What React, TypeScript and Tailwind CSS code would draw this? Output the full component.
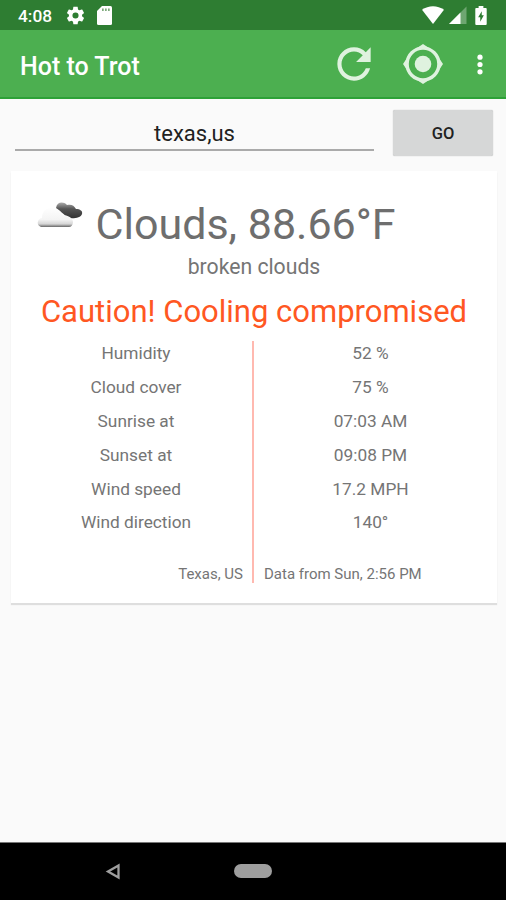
const readings: [string, string][] = [
  ["Humidity", "52 %"],
  ["Cloud cover", "75 %"],
  ["Sunrise at", "07:03 AM"],
  ["Sunset at", "09:08 PM"],
  ["Wind speed", "17.2 MPH"],
  ["Wind direction", "140°"],
];

function StatusBar() {
  return (
    <div className="flex h-[30px] shrink-0 items-center bg-[#2e7d32] pl-[18px] pr-[19px] text-white">
      <span className="w-[47px] pt-[2px] text-[17.300px] font-medium leading-5">4:08</span>
      <svg className="size-[21px]" viewBox="0 0 24 24" fill="currentColor">
        <path d="M19.43 12.98c.04-.32.07-.64.07-.98s-.03-.66-.07-.98l2.11-1.65c.19-.15.24-.42.12-.64l-2-3.46c-.12-.22-.39-.3-.61-.22l-2.49 1c-.52-.4-1.08-.73-1.69-.98l-.38-2.65C14.46 2.18 14.25 2 14 2h-4c-.25 0-.46.18-.49.42l-.38 2.65c-.61.25-1.17.59-1.69.98l-2.49-1c-.23-.09-.49 0-.61.22l-2 3.46c-.13.22-.07.49.12.64l2.11 1.65c-.04.32-.07.65-.07.98s.03.66.07.98l-2.11 1.65c-.19.15-.24.42-.12.64l2 3.46c.12.22.39.3.61.22l2.49-1c.52.4 1.08.73 1.69.98l.38 2.65c.03.24.24.42.49.42h4c.25 0 .46-.18.49-.42l.38-2.65c.61-.25 1.17-.59 1.69-.98l2.49 1c.23.09.49 0 .61-.22l2-3.46c.12-.22.07-.49-.12-.64l-2.11-1.65zM12 15.500a3.500 3.500 0 1 1 0-7 3.500 3.500 0 0 1 0 7z" />
      </svg>
      <svg className="ml-[11px] h-[19px] w-[15px]" viewBox="0 0 15 19">
        <path d="M5 0h8.500A1.500 1.500 0 0 1 15 1.500v16a1.500 1.500 0 0 1-1.500 1.500h-12A1.500 1.500 0 0 1 0 17.500V5z" fill="white" />
        <path d="M5 2.500h1.700V5H5zM8 2.500h1.700V5H8zM11 2.500h1.700V5H11z" fill="#7eaa7d" />
      </svg>
      <div className="grow" />
      <svg className="h-[18px] w-[22px]" viewBox="0 0 22 18">
        <path d="M0 3.800C6.500-.9 15.500-.9 22 3.800L11 18z" fill="white" />
      </svg>
      <svg className="ml-[5px] h-[18px] w-[18px]" viewBox="0 0 18 18">
        <path d="M0 18L17.500.5V18z" fill="#6ea671" />
        <path d="M0 18L11.500 6.500V18z" fill="white" />
      </svg>
      <svg className="ml-[8px] h-[19px] w-[12px]" viewBox="0 0 12 20">
        <path d="M3.500 0h5v2H11a1 1 0 0 1 1 1v16a1 1 0 0 1-1 1H1a1 1 0 0 1-1-1V3a1 1 0 0 1 1-1h2.500z" fill="white" />
        <path d="M6.800 5.500v4.300h2.200L5.200 16.500v-4.700H3z" fill="#2e7d32" />
      </svg>
    </div>
  );
}

function AppBar() {
  return (
    <header className="flex h-[69px] shrink-0 items-center border-b-2 border-[#2da137] bg-[#4caf50] pl-[20px] pr-[22px] text-white">
      <h1 className="grow pt-[6px] text-[25px] font-medium leading-8">Hot to Trot</h1>
      <svg className="mr-[24.500px] size-[50px]" viewBox="0 0 24 24" fill="#dff2df">
        <path d="M17.650 6.350C16.200 4.900 14.210 4 12 4c-4.420 0-7.990 3.580-7.990 8s3.570 8 7.990 8c3.730 0 6.840-2.550 7.730-6h-2.080c-.82 2.330-3.040 4-5.650 4-3.310 0-6-2.690-6-6s2.690-6 6-6c1.660 0 3.140.69 4.220 1.780L13 11h7V4l-2.350 2.350z" />
      </svg>
      <svg className="size-[40px]" viewBox="0 0 40 40">
        <path d="M14 4L20 0l6 4M36 14l4 6-4 6M26 36l-6 4-6-4M4 26l-4-6 4-6" fill="#dff2df" />
        <circle cx="20" cy="20" r="15.900" fill="#4caf50" stroke="#dff2df" strokeWidth="3.400" />
        <circle cx="20" cy="20" r="8.300" fill="#dff2df" />
      </svg>
      <svg className="ml-[33px] h-[22px] w-[8px]" viewBox="0 0 8 22" fill="white">
        <circle cx="4" cy="4.200" r="2.600" />
        <circle cx="4" cy="11.500" r="2.600" />
        <circle cx="4" cy="18.800" r="2.600" />
      </svg>
    </header>
  );
}

function CloudIcon() {
  return (
    <svg className="h-[28px] w-[48px]" viewBox="0 0 48 28">
      <defs>
        <linearGradient id="pale" x1="0" y1="0" x2="0" y2="1">
          <stop offset="0" stopColor="#fefefe" />
          <stop offset=".6" stopColor="#f4f4f4" />
          <stop offset=".84" stopColor="#d6d6d6" />
          <stop offset="1" stopColor="#666" />
        </linearGradient>
        <linearGradient id="dark" x1="0" y1="0" x2="0" y2="1">
          <stop offset="0" stopColor="#aaa" />
          <stop offset=".4" stopColor="#555" />
          <stop offset="1" stopColor="#333" />
        </linearGradient>
      </defs>
      <path d="M20 8c1-6 7-7 11-3 4-1 7 0 9 4 4 0 7 2 6 5-1 4-9 5-13 4-4-2-7-6-13-10z" fill="url(#dark)" />
      <path d="M5 27c-5-2-4-8 1-9 0-7 6-12 12-9 4 0 7 2 8 6 6 0 11 3 11 7 0 3-2 5-4 5z" fill="url(#pale)" />
    </svg>
  );
}

function WeatherCard() {
  return (
    <section className="ml-[11px] mr-[9px] mt-[14px] flex h-[432px] flex-col bg-white text-[#757575] shadow-[0_2px_1px_#dedede]">
      <div className="flex h-[81px] pl-[25px]">
        <div className="pt-[29px]"><CloudIcon /></div>
        <div className="ml-[11.500px] pt-[26px] text-[43px] leading-[54px] text-[#6e6e6e]">Clouds, 88.66°F</div>
      </div>
      <div className="h-[39px] pt-[1px] text-center text-[21.200px] leading-[28px]">broken clouds</div>
      <div className="h-[50px] pt-[1px] text-center text-[31px] leading-[40px] text-[#ff5722]">Caution! Cooling compromised</div>
      <div className="flex h-[242px] text-[17.300px]">
        <div className="flex w-[241px] flex-col">
          {readings.map(([label]) => (
            <div key={label} className="h-[33.900px] pl-[9px] text-center leading-[25px]">{label}</div>
          ))}
          <div className="mt-auto pr-[9px] text-right text-[15px] leading-[18px]">Texas, US</div>
        </div>
        <div className="w-[2px] bg-[#ffb9b0]" />
        <div className="flex w-[242px] flex-col">
          {readings.map(([label, value]) => (
            <div key={label} className="h-[33.900px] pr-[9px] text-center leading-[25px]">{value}</div>
          ))}
          <div className="mt-auto pl-[10px] text-[15px] leading-[18px]">Data from Sun, 2:56 PM</div>
        </div>
      </div>
    </section>
  );
}

export default function App() {
  return (
    <div className="flex h-[900px] w-[506px] flex-col overflow-hidden bg-[#fafafa] font-[Roboto,sans-serif]">
      <StatusBar />
      <AppBar />
      <main className="grow">
        <div className="flex h-[58px] pl-[15px] pr-[13px] pt-[11px]">
          <div className="h-[41px] w-[359px] border-b-2 border-[#aaaaaa] pt-[10px] text-center text-[22px] leading-[28px] text-[#212121]">texas,us</div>
          <button className="ml-[19px] h-[46px] w-[100px] rounded-[2px] bg-[#d6d7d7] pt-[2px] text-[16.500px] font-medium text-[#212121] shadow-[0_0_1px_#aaa]">GO</button>
        </div>
        <WeatherCard />
      </main>
      <nav className="flex h-[58px] shrink-0 items-center border-t border-[#777] bg-black pl-[105px] text-[#9e9e9e]">
        <svg className="h-[17px] w-[16px]" viewBox="0 0 16 17">
          <path d="M13.500 2.500v12L3 8.500z" fill="none" stroke="currentColor" strokeWidth="2.300" />
        </svg>
        <div className="mb-[2px] ml-[113px] h-[14px] w-[38px] rounded-full bg-[#9e9e9e]" />
      </nav>
    </div>
  );
}
